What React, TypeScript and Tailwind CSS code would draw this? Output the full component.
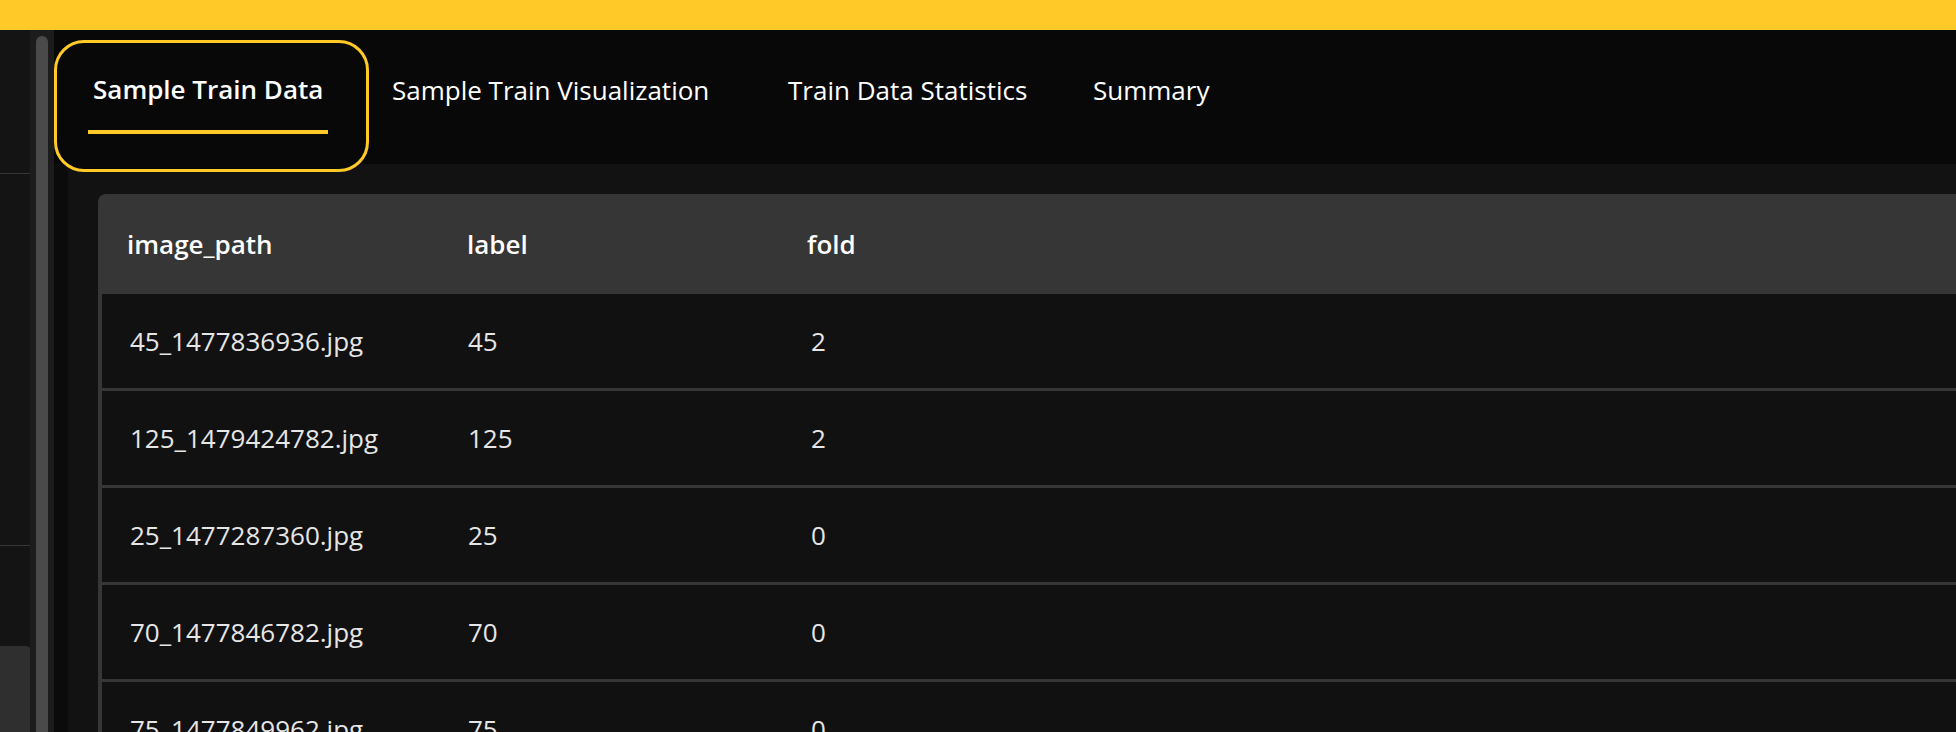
import React from "react";

const rows = [
  ["45_1477836936.jpg", "45", "2"],
  ["125_1479424782.jpg", "125", "2"],
  ["25_1477287360.jpg", "25", "0"],
  ["70_1477846782.jpg", "70", "0"],
  ["75_1477849962.jpg", "75", "0"],
];

export default function App() {
  return (
    <div
      className="w-[1956px] h-[732px] overflow-hidden flex flex-col bg-[#080808] text-white"
      style={{ fontFamily: '"Open Sans", "Noto Sans", sans-serif' }}
    >
      <div className="h-[30px] shrink-0 bg-[#ffca28]" />
      <div className="flex flex-1 min-h-0">
        {/* left sidebar */}
        <div className="w-[30px] shrink-0 flex flex-col bg-[#141414]">
          <div className="h-[144px] shrink-0 border-b border-[#363636]" />
          <div className="h-[372px] shrink-0 border-b border-[#363636]" />
          <div className="flex-1" />
          <div className="h-[86px] shrink-0 bg-[#2f2f2f] rounded-tr-[4px]" />
        </div>
        {/* scrollbar */}
        <div className="w-[24px] shrink-0 bg-[#1c1c1c] pl-[6px] pt-[6px] flex">
          <div className="w-[12px] h-[720px] rounded-full bg-[#4a4a4a]" />
        </div>
        {/* main */}
        <div className="flex-1 min-w-0 flex flex-col">
          {/* tab bar */}
          <div className="h-[134px] shrink-0 flex items-start bg-[#080808]">
            <div className="relative z-10 mt-[10px] w-[315px] h-[132px] shrink-0 rounded-[30px] border-[3px] border-[#ffca28] bg-[#080808] pl-[31px] pt-[28px]">
              <div className="inline-flex flex-col">
                <span className="px-[5px] text-[26px] leading-[36px] font-semibold whitespace-nowrap">
                  Sample Train Data
                </span>
                <div className="mt-[23px] h-[4px] w-full bg-[#ffca28]" />
              </div>
            </div>
            <div className="w-[419px] shrink-0 pl-[23px] mt-[42px] text-[26px] leading-[36px] whitespace-nowrap">
              Sample Train Visualization
            </div>
            <div className="w-[305px] shrink-0 mt-[42px] text-[26px] leading-[36px] whitespace-nowrap">
              Train Data Statistics
            </div>
            <div className="shrink-0 mt-[42px] text-[26px] leading-[36px] whitespace-nowrap">
              Summary
            </div>
          </div>
          {/* content */}
          <div className="flex flex-1 min-h-0">
            <div className="w-[14px] shrink-0 bg-[#0b0b0b]" />
            <div className="flex-1 min-w-0 bg-[#121212] pl-[30px] pt-[30px]">
              <div className="rounded-tl-[8px] bg-[#363636] pl-[4px] overflow-hidden">
                <div className="h-[100px] -ml-[4px] flex items-center text-[26px] font-semibold text-white">
                  <div className="w-[340px] pl-[29px]">image_path</div>
                  <div className="w-[340px] pl-[29px]">label</div>
                  <div className="pl-[29px]">fold</div>
                </div>
                {rows.map((r, i) => (
                  <div
                    key={i}
                    className="h-[97px] flex items-center bg-[#111111] border-b-[3px] border-[#363636] text-[26px] text-[#e6e6e6]"
                  >
                    <div className="w-[336px] pl-[28px] whitespace-nowrap">{r[0]}</div>
                    <div className="w-[340px] pl-[30px]">{r[1]}</div>
                    <div className="pl-[33px]">{r[2]}</div>
                  </div>
                ))}
              </div>
            </div>
          </div>
        </div>
      </div>
    </div>
  );
}
